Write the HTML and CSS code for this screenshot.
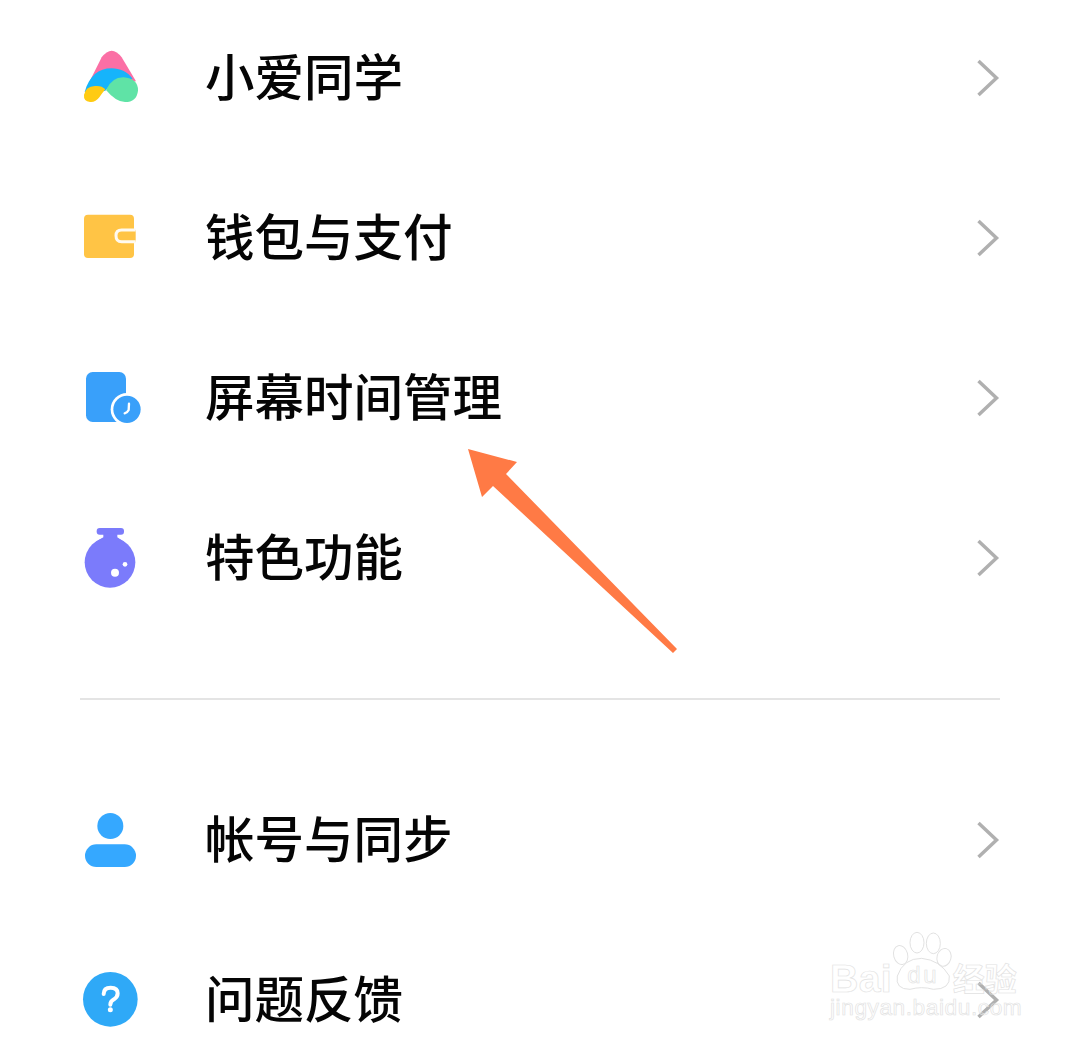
FILE: index.html
```html
<!DOCTYPE html>
<html lang="zh-CN">

<head>
    <meta charset="UTF-8">
    <meta name="viewport" content="width=device-width, initial-scale=1.0">
    <title>设置</title>
    <link rel="stylesheet" href="styles.css">
</head>

<body>

	<main class="settings">

		<ul class="group group-first">
			<li class="row">
				<svg class="icon" viewBox="0 9 240 210">
					<path fill="#fb6fa5" d="M95 52 Q125 12 155 52 L198 124 L56 130 Z"/>
					<path fill="#16b4fb" d="M44 156 C58 108 85 85 125 85 C150 85 172 95 188 116 L150 122 Q125 126 106 152 L75 158 Z"/>
					<path fill="#ffcb12" d="M42 165 Q46 140 75 138 Q95 136 106 148 Q96 160 88 172 Q76 188 60 186 Q40 184 42 165 Z"/>
					<path fill="#5fe3a6" d="M108 150 Q125 112 160 112 Q205 116 204 152 Q200 186 165 186 Q138 186 108 150 Z"/>
				</svg>
				<span class="label">小爱同学</span>
				<svg class="chevron" viewBox="0 0 30 44"><path d="M8.5 5 L26.5 22 L8.5 39"/></svg>
			</li>
			<li class="row">
				<svg class="icon" viewBox="0 9 240 210">
					<rect x="42" y="44" width="150" height="130" rx="12" fill="#ffc445"/>
					<path fill="#ffc445" stroke="#fffaf0" stroke-width="9" d="M197 90 H155 Q138 90 138 107 Q138 125 155 125 H197"/>
				</svg>
				<span class="label">钱包与支付</span>
				<svg class="chevron" viewBox="0 0 30 44"><path d="M8.5 5 L26.5 22 L8.5 39"/></svg>
			</li>
			<li class="row">
				<svg class="icon" viewBox="0 9 240 210">
					<rect x="48" y="36" width="120" height="150" rx="20" fill="#39a0fa"/>
					<circle cx="171" cy="148" r="49" fill="#fff"/>
					<circle cx="171" cy="148" r="41" fill="#39a0fa"/>
					<path fill="none" stroke="#fff" stroke-width="7" stroke-linecap="round" d="M177 131 L176 150 Q172 158 164 160"/>
				</svg>
				<span class="label">屏幕时间管理</span>
				<svg class="chevron" viewBox="0 0 30 44"><path d="M8.5 5 L26.5 22 L8.5 39"/></svg>
			</li>
			<li class="row">
				<svg class="icon" viewBox="0 9 240 210">
					<rect x="80" y="24" width="82" height="20" rx="9" fill="#7b7bfb"/>
					<path fill="#7b7bfb" d="M100 40 H142 V52 Q150 58 165 68 H75 Q90 58 100 52 Z"/>
					<circle cx="120" cy="127" r="76" fill="#7b7bfb"/>
					<circle cx="135" cy="158" r="12" fill="#fff"/>
					<circle cx="165" cy="133" r="7" fill="#fff"/>
				</svg>
				<span class="label">特色功能</span>
				<svg class="chevron" viewBox="0 0 30 44"><path d="M8.5 5 L26.5 22 L8.5 39"/></svg>
			</li>
		</ul>

		<div class="divider"></div>

		<ul class="group">
			<li class="row">
				<svg class="icon" viewBox="0 0 240 210">
					<circle cx="121" cy="63" r="39" fill="#35a8ff"/>
					<rect x="45" y="118" width="153" height="68" rx="34" fill="#35a8ff"/>
				</svg>
				<span class="label">帐号与同步</span>
				<svg class="chevron" viewBox="0 0 30 44"><path d="M8.5 5 L26.5 22 L8.5 39"/></svg>
			</li>
			<li class="row">
				<svg class="icon" viewBox="0 0 240 210">
					<circle cx="121" cy="103" r="82" fill="#2fa9f7"/>
					<path fill="none" stroke="#fff" stroke-width="12" stroke-linecap="round" d="M101 87 Q101 68 122 68 Q143 68 143 85 Q143 96 132 103 Q121 109 121 119"/>
					<circle cx="121" cy="134" r="7.5" fill="#fff"/>
				</svg>
				<span class="label">问题反馈</span>
				<svg class="chevron" viewBox="0 0 30 44"><path d="M8.5 5 L26.5 22 L8.5 39"/></svg>
			</li>
		</ul>

	</main>

	<svg class="arrow" viewBox="460 440 230 220">
		<path d="M468 449 L517 462 L506 474 L677 649 L673 653 L493 486 L482 497 Z"/>
	</svg>

	<svg class="watermark" viewBox="0 0 660 330">
		<text class="wm-bai" x="30" y="215" textLength="185">Bai</text>
		<ellipse class="wm-line" cx="242" cy="105" rx="21" ry="29" transform="rotate(-15 242 105)"/>
		<ellipse class="wm-line" cx="291" cy="68" rx="21" ry="31"/>
		<ellipse class="wm-line" cx="340" cy="70" rx="21" ry="31"/>
		<ellipse class="wm-line" cx="372" cy="112" rx="21" ry="27" transform="rotate(15 372 112)"/>
		<path class="wm-line" d="M232 168 Q250 115 305 115 Q360 120 388 168 Q392 208 340 208 Q305 198 270 208 Q225 208 232 168 Z"/>
		<text class="wm-du" x="262" y="190" textLength="88">du</text>
		<text class="wm-cn" x="398" y="212">经验</text>
		<text class="wm-url" x="30" y="284" textLength="575">jingyan.baidu.com</text>
	</svg>

</body>
</html>
```

FILE: styles.css
```css
html, body {
	margin: 0;
	padding: 0;
	height: 1047px;
	overflow: hidden;
	background-color: #fff;
}

body {
	position: relative;
	font-family: "Noto Sans CJK SC", "Liberation Sans", sans-serif;
	color: #050505;
}

.group {
	list-style: none;
	margin: 0;
	padding: 0;
}

.group-first {
	margin-top: -2px;
}

.row {
	display: flex;
	align-items: center;
	height: 160px;
	padding: 0 80px 0 70px;
}

.icon {
	width: 80px;
	height: 70px;
	flex: none;
}

.label {
	flex: 1;
	margin-left: 55px;
	padding-bottom: 6px;
	font-size: 49.5px;
	font-weight: 500;
	line-height: 70px;
}

.chevron {
	width: 30px;
	height: 44px;
	flex: none;
}

.chevron path {
	fill: none;
	stroke: #b0b0b0;
	stroke-width: 3.5px;
}

.divider {
	height: 2px;
	margin: 60px 80px 60px;
	background-color: #e4e4e4;
}

.arrow {
	position: absolute;
	left: 460px;
	top: 440px;
	width: 230px;
	height: 220px;
}

.arrow path {
	fill: #ff7a45;
}

.watermark {
	position: absolute;
	left: 820px;
	top: 920px;
	width: 220px;
	height: 110px;
}

.watermark text {
	fill: none;
	stroke: #e2e2e2;
	stroke-width: 2px;
	font-family: "Liberation Sans", sans-serif;
}

.wm-line {
	fill: none;
	stroke: #e2e2e2;
	stroke-width: 3px;
}

.watermark .wm-bai {
	font-size: 118px;
	font-weight: 700;
}

.watermark .wm-du {
	font-size: 72px;
}

.watermark .wm-cn {
	font-family: "Noto Sans CJK SC", sans-serif;
	font-size: 96px;
	font-weight: 700;
}

.watermark .wm-url {
	font-size: 68px;
}
```
